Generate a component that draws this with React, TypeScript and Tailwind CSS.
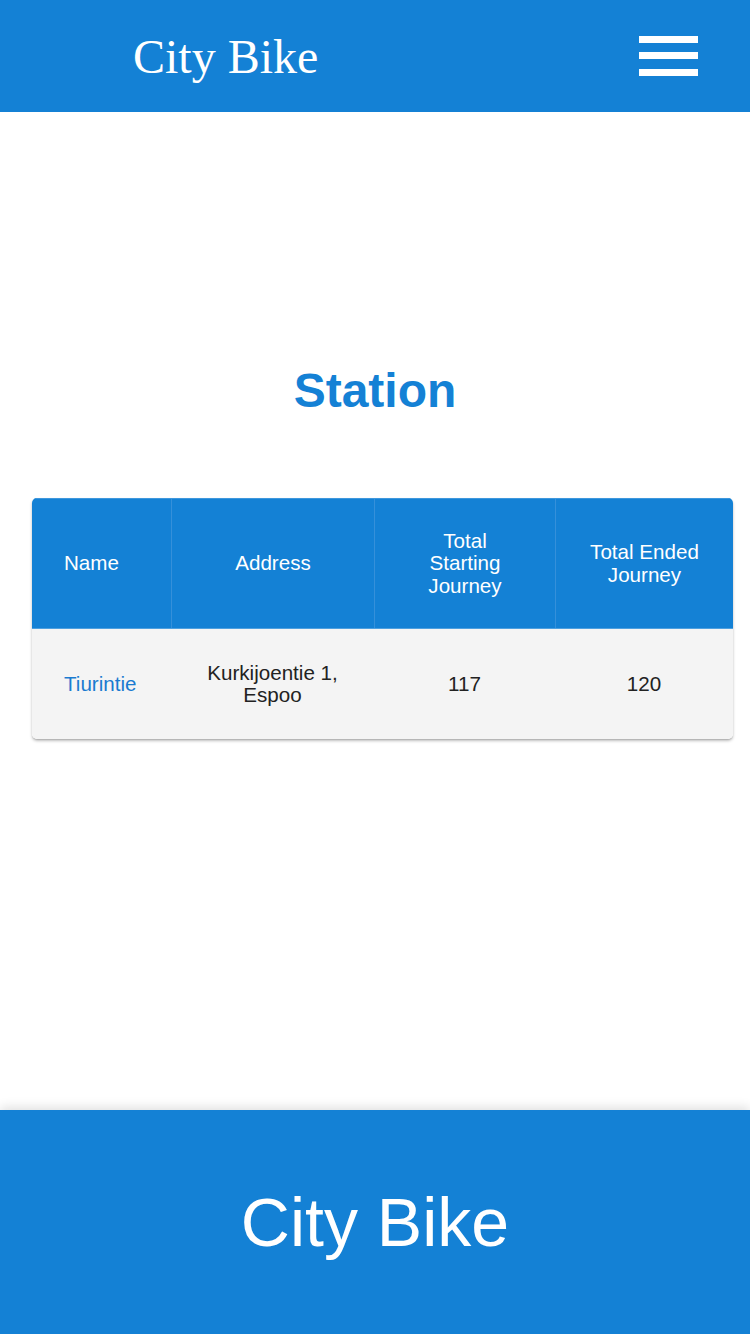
import React from "react";

const BLUE = "bg-[#1481d5]";

export default function App() {
  return (
    <div className="min-h-[1334px] flex flex-col bg-white" style={{ fontFamily: '"Liberation Sans", Arial, sans-serif' }}>
      <header className={`${BLUE} h-[112px] flex items-center justify-between pl-[133px] pr-[52px]`}>
        <div className="text-white text-[48px] leading-none pt-[1px]" style={{ fontFamily: '"Liberation Serif", "Times New Roman", serif' }}>
          City Bike
        </div>
        <div className="flex flex-col gap-[9.5px] mt-[-0.5px]">
          <div className="w-[59px] h-[7px] bg-white" />
          <div className="w-[59px] h-[7px] bg-white" />
          <div className="w-[59px] h-[7px] bg-white" />
        </div>
      </header>

      <main className="flex-1 flex flex-col pt-[251px]">
        <h1 className="text-center text-[48px] leading-[56px] font-bold text-[#1481d5]">Station</h1>

        <div className="mt-[79px] ml-[32px] w-[701px] rounded-[5px] overflow-hidden shadow-[0_2px_3px_rgba(0,0,0,0.25),0_1px_1px_rgba(0,0,0,0.1)]">
          <div className={`${BLUE} grid grid-cols-[139px_203px_181px_178px] h-[131px] text-white text-[20.6px] leading-[22.5px] border-t border-[#3d97dd] border-b border-b-[#4ea0e0]`}>
            <div className="flex items-center pl-[32px]">Name</div>
            <div className="flex items-center justify-center text-center border-l border-[#3590da]">Address</div>
            <div className="flex items-center justify-center text-center border-l border-[#3590da] px-[48px]">Total Starting Journey</div>
            <div className="flex items-center justify-center text-center border-l border-[#3590da] px-[20px]">Total Ended Journey</div>
          </div>
          <div className="grid grid-cols-[139px_203px_181px_178px] h-[110px] bg-[#f4f4f4] text-[#222] text-[20.6px] leading-[22px]">
            <div className="flex items-center pl-[32px] text-[#1a7bd0]">Tiurintie</div>
            <div className="flex items-center justify-center text-center px-[20px]">Kurkijoentie 1, Espoo</div>
            <div className="flex items-center justify-center text-center">117</div>
            <div className="flex items-center justify-center text-center">120</div>
          </div>
        </div>
      </main>

      <footer className={`${BLUE} h-[224px] flex items-center justify-center shadow-[0_-3px_10px_rgba(0,0,0,0.12)]`}>
        <div className="text-white text-[68px] leading-none">City Bike</div>
      </footer>
    </div>
  );
}
